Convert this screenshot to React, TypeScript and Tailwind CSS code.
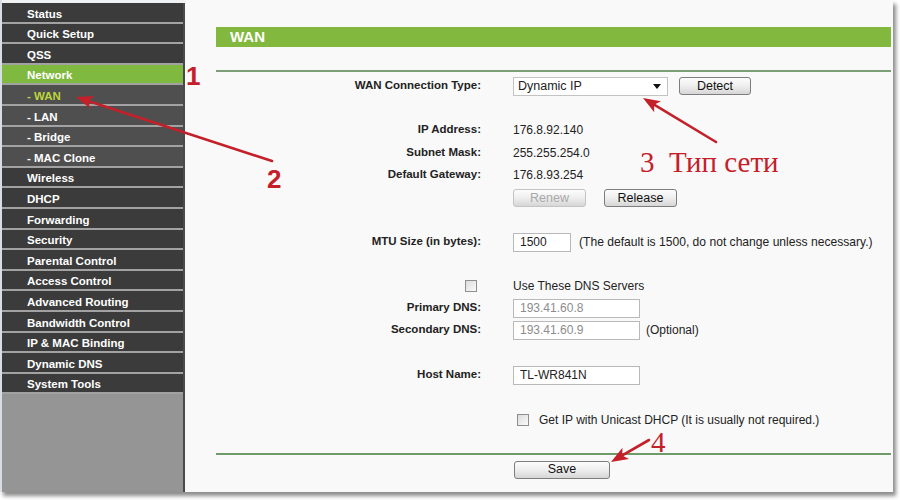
import React from "react";

const RED = "#c4202a";

const items: { t: string; kind: "main" | "sub" | "active" | "subactive" }[] = [
  { t: "Status", kind: "main" },
  { t: "Quick Setup", kind: "main" },
  { t: "QSS", kind: "main" },
  { t: "Network", kind: "active" },
  { t: "- WAN", kind: "subactive" },
  { t: "- LAN", kind: "sub" },
  { t: "- Bridge", kind: "sub" },
  { t: "- MAC Clone", kind: "sub" },
  { t: "Wireless", kind: "main" },
  { t: "DHCP", kind: "main" },
  { t: "Forwarding", kind: "main" },
  { t: "Security", kind: "main" },
  { t: "Parental Control", kind: "main" },
  { t: "Access Control", kind: "main" },
  { t: "Advanced Routing", kind: "main" },
  { t: "Bandwidth Control", kind: "main" },
  { t: "IP & MAC Binding", kind: "main" },
  { t: "Dynamic DNS", kind: "main" },
  { t: "System Tools", kind: "main" },
];

function Arrow({ x0, y0, x1, y1 }: { x0: number; y0: number; x1: number; y1: number }) {
  const dx = x1 - x0;
  const dy = y1 - y0;
  const len = Math.hypot(dx, dy);
  const ux = dx / len;
  const uy = dy / len;
  const L = 17;
  const W = 6.5;
  const bx = x1 - ux * L;
  const by = y1 - uy * L;
  const nx = -uy;
  const ny = ux;
  const pts = `${x1},${y1} ${bx + nx * W},${by + ny * W} ${bx + ux * 4},${by + uy * 4} ${bx - nx * W},${by - ny * W}`;
  return (
    <g>
      <line x1={x0} y1={y0} x2={bx + ux * 5} y2={by + uy * 5} stroke={RED} strokeWidth={2.6} strokeLinecap="round" />
      <polygon points={pts} fill={RED} />
    </g>
  );
}

function Btn({ children, w, disabled }: { children: React.ReactNode; w: string; disabled?: boolean }) {
  return (
    <div
      className={`${w} h-[18px] flex items-center justify-center rounded-[3px] border text-[12.5px] leading-none bg-gradient-to-b from-[#fdfdfd] via-[#eeeeee] to-[#d6d6d6] ${
        disabled ? "border-[#c4c4c4] text-[#a8a8a8]" : "border-[#7d7d7d] text-[#111]"
      }`}
    >
      {children}
    </div>
  );
}

function Row({ label, children, className = "" }: { label?: React.ReactNode; children?: React.ReactNode; className?: string }) {
  return (
    <div className={`flex items-center h-[22px] ${className}`}>
      <div className="w-[265px] text-right font-bold text-[11.5px] text-[#222] flex justify-end items-center">{label}</div>
      <div className="ml-[32px] flex items-center text-[12px] text-[#222]">{children}</div>
    </div>
  );
}

function Input({ w, value, grey }: { w: string; value: string; grey?: boolean }) {
  return (
    <div className={`${w} h-[19px] border border-[#b9b9b9] bg-white flex items-center pl-[6px] text-[12px] ${grey ? "text-[#8c8c8c]" : "text-[#222]"}`}>
      {value}
    </div>
  );
}

function Check({ className = "" }: { className?: string }) {
  return (
    <div className={`w-[12px] h-[12px] border border-[#8f8f8f] bg-gradient-to-br from-[#dcdcdc] to-[#fafafa] ${className}`} />
  );
}

export default function App() {
  return (
    <div className="w-[900px] h-[500px] bg-white relative overflow-hidden font-['Liberation_Sans',Arial,sans-serif]">
      <div className="w-[893px] h-[492px] flex bg-[#f8f9f9] border-l-[2px] border-[#d9dee6] shadow-[3px_4px_4px_rgba(0,0,0,0.45)]">
        {/* Sidebar */}
        <div className="w-[183px] flex flex-col pt-[3px] bg-[#f0f1f2]">
          <div className="flex flex-col border-r-[2px] border-[#4a4a4a] flex-1 bg-[#a2a2a2]">
            {items.map((it, i) => (
              <div
                key={it.t}
                className={`h-[18.6px] ${i > 0 ? "mt-[2px]" : ""} flex items-center pl-[25px] pt-[4px] font-bold text-[11.5px] ${
                  it.kind === "active"
                    ? "bg-[#7fb93f] text-white"
                    : it.kind === "sub"
                    ? "bg-[#4f4f4f] text-white"
                    : it.kind === "subactive"
                    ? "bg-[#4f4f4f] text-[#bcd63a]"
                    : "bg-[#3b3b3b] text-white"
                }`}
              >
                {it.t}
              </div>
            ))}
            <div className="mt-[2px] flex-1 bg-[#959595]" />
          </div>
        </div>

        {/* Main */}
        <div className="flex-1 pl-[31px] pr-[2px] bg-[#f9f9f9]">
          <div className="mt-[27px] h-[20px] bg-[#83b83f] flex items-center pl-[14px] text-white font-bold text-[15px]">WAN</div>
          <div className="mt-[23px] h-[2px] bg-[#7c9f78]" />

          <Row label="WAN Connection Type:" className="mt-[3px]">
            <div className="w-[155px] h-[19px] border border-[#c3c3c3] bg-white flex items-center justify-between pl-[4px] pr-[6px]">
              <span className="text-[12.5px]">Dynamic IP</span>
              <svg width="8" height="5" viewBox="0 0 8 5">
                <polygon points="0,0 8,0 4,5" fill="#111" />
              </svg>
            </div>
            <div className="ml-[11px]">
              <Btn w="w-[72px]">Detect</Btn>
            </div>
          </Row>

          <Row label="IP Address:" className="mt-[22px]">176.8.92.140</Row>
          <Row label="Subnet Mask:" className="mt-[1px]">255.255.254.0</Row>
          <Row label="Default Gateway:">176.8.93.254</Row>
          <Row className="mt-[1px]">
            <Btn w="w-[73px]" disabled>Renew</Btn>
            <div className="ml-[18px]">
              <Btn w="w-[73px]">Release</Btn>
            </div>
          </Row>

          <Row label="MTU Size (in bytes):" className="mt-[22px]">
            <Input w="w-[58px]" value="1500" />
            <span className="ml-[8px] whitespace-nowrap text-[12.1px]">(The default is 1500, do not change unless necessary.)</span>
          </Row>

          <Row label={<Check className="mr-[4px]" />} className="mt-[22px]">
            Use These DNS Servers
          </Row>
          <Row label="Primary DNS:">
            <Input w="w-[127px]" value="193.41.60.8" grey />
          </Row>
          <Row label="Secondary DNS:">
            <Input w="w-[127px]" value="193.41.60.9" grey />
            <span className="ml-[6px]">(Optional)</span>
          </Row>

          <Row label="Host Name:" className="mt-[23px]">
            <Input w="w-[127px]" value="TL-WR841N" />
          </Row>

          <Row className="mt-[23px]">
            <Check className="ml-[4px]" />
            <span className="ml-[10px] text-[12px] whitespace-nowrap">Get IP with Unicast DHCP (It is usually not required.)</span>
          </Row>

          <div className="mt-[22px] h-[1.5px] bg-[#6e9b6a]" />
          <div className="mt-[6px] flex">
            <div className="ml-[298px]">
              <Btn w="w-[96px]">Save</Btn>
            </div>
          </div>
        </div>
      </div>

      {/* Annotations */}
      <div className="absolute left-[186px] top-[63px] text-[26px] font-bold leading-none" style={{ color: RED }}>1</div>
      <div className="absolute left-[267px] top-[166px] text-[26px] font-bold leading-none" style={{ color: RED }}>2</div>
      <div className="absolute left-[640px] top-[148px] text-[29px] leading-none whitespace-pre font-['Liberation_Serif',serif]" style={{ color: RED }}>
        {"3  Тип сети"}
      </div>
      <div className="absolute left-[651px] top-[428px] text-[29px] leading-none font-['Liberation_Serif',serif]" style={{ color: RED }}>4</div>
      <svg className="absolute left-0 top-0 pointer-events-none" width="900" height="500">
        <Arrow x0={272} y0={161} x1={76} y1={97} />
        <Arrow x0={716} y0={142} x1={643} y1={98} />
        <Arrow x0={649} y0={440} x1={611} y1={462} />
      </svg>
    </div>
  );
}
